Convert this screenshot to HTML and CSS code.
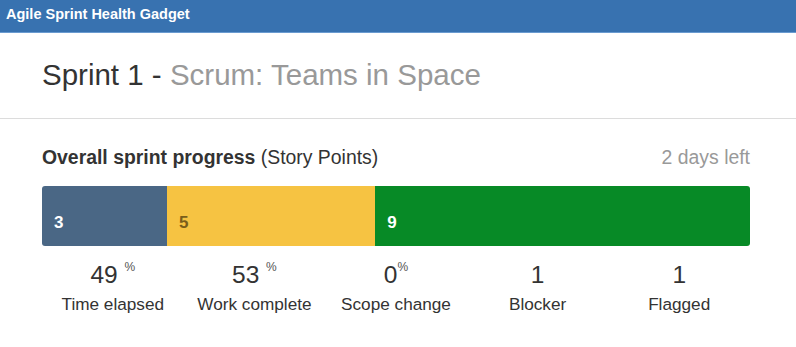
FILE: index.html
```html
<!DOCTYPE html>
<html>
<head>
<meta charset="utf-8">
<link rel="stylesheet" href="styles.css">
</head>
<body>
<div class="gadget-header">Agile Sprint Health Gadget</div>
<div class="sprint-title">Sprint 1 - <span class="board">Scrum: Teams in Space</span></div>
<div class="progress-section">
  <div class="progress-head">
    <div class="progress-label"><strong>Overall sprint progress</strong> (Story Points)</div>
    <div class="days-left">2 days left</div>
  </div>
  <div class="bar">
    <div class="seg seg-todo" style="width:17.647%">3</div>
    <div class="seg seg-progress" style="width:29.412%">5</div>
    <div class="seg seg-done" style="width:52.941%">9</div>
  </div>
  <div class="stats">
    <div class="stat"><div class="value">49 <sup>%</sup></div><div class="label">Time elapsed</div></div>
    <div class="stat"><div class="value">53 <sup>%</sup></div><div class="label">Work complete</div></div>
    <div class="stat"><div class="value">0<sup>%</sup></div><div class="label">Scope change</div></div>
    <div class="stat"><div class="value">1</div><div class="label">Blocker</div></div>
    <div class="stat"><div class="value">1</div><div class="label">Flagged</div></div>
  </div>
</div>
</body>
</html>
```
FILE: styles.css
```css
html, body {
  margin: 0;
  padding: 0;
  background: #fff;
  font-family: "Liberation Sans", Arial, sans-serif;
  color: #333;
}
.gadget-header {
  height: 33px;
  box-sizing: border-box;
  background: #3872b0;
  border-bottom: 1px solid #6a9bd0;
  color: #fff;
  font-weight: bold;
  font-size: 14.5px;
  line-height: 17px;
  padding: 6px 6px 0;
}
.sprint-title {
  font-size: 29.5px;
  line-height: 33px;
  padding: 25px 42px 27px;
  color: #333;
  border-bottom: 1px solid #dcdcdc;
}
.sprint-title .board {
  color: #999;
}
.progress-section {
  padding: 27px 46px 0 42px;
}
.progress-head {
  display: flex;
  justify-content: space-between;
  font-size: 19.4px;
  line-height: 22px;
}
.progress-label strong {
  color: #333;
}
.days-left {
  color: #999;
}
.bar {
  display: flex;
  height: 60px;
  margin-top: 18px;
  border-radius: 3px;
  overflow: hidden;
}
.seg {
  box-sizing: border-box;
  flex: none;
  display: flex;
  align-items: flex-end;
  padding: 0 0 14px 12px;
  font-weight: bold;
  font-size: 17px;
  line-height: 18px;
  color: #fff;
}
.seg-todo { background: #4a6785; }
.seg-progress { background: #f6c342; color: #7a5d1a; }
.seg-done { background: #078a26; }
.stats {
  display: grid;
  grid-template-columns: repeat(5, 1fr);
  margin-top: 15px;
  text-align: center;
}
.value {
  font-size: 24.5px;
  line-height: 28px;
  color: #333;
}
.value sup {
  font-size: 12px;
  color: #555;
  vertical-align: 12px;
  line-height: 0;
}
.label {
  margin-top: 5px;
  font-size: 17.2px;
  line-height: 20px;
  color: #333;
}
```
